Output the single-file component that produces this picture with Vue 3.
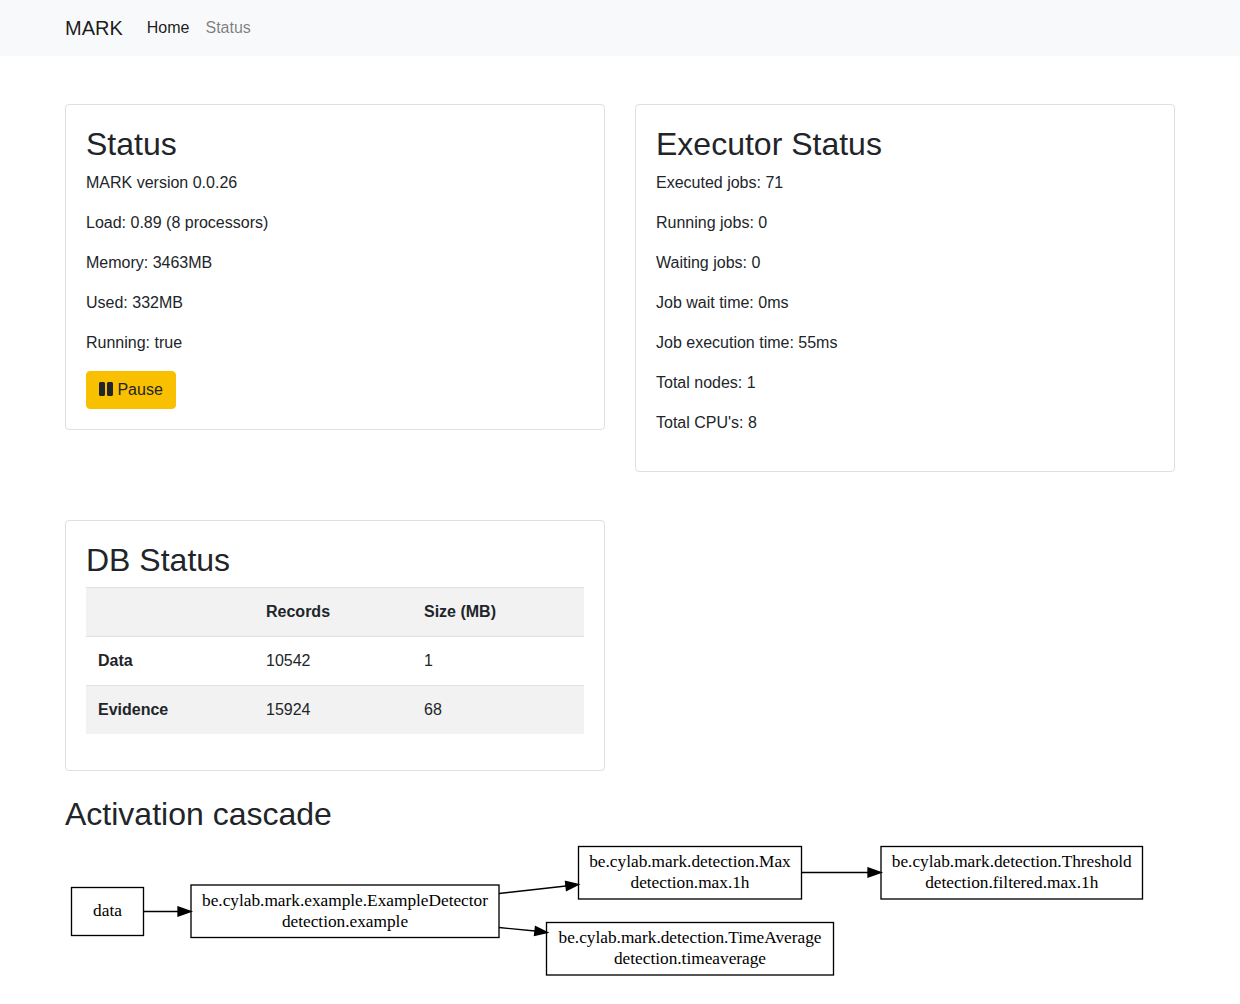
<template>
  <nav class="navbar">
    <a class="brand">MARK</a>
    <a class="nav-link active">Home</a>
    <a class="nav-link">Status</a>
  </nav>

  <main class="container">
    <div class="row">
      <section class="card">
        <h2>Status</h2>
        <p v-for="line in statusLines" :key="line">{{ line }}</p>
        <button class="btn-pause">
          <svg class="pause-icon" width="14" height="16" viewBox="0 0 448 512" fill="currentColor">
            <path d="M144 479H48c-26.5 0-48-21.5-48-48V79c0-26.5 21.5-48 48-48h96c26.5 0 48 21.5 48 48v352c0 26.5-21.5 48-48 48zm304-48V79c0-26.5-21.5-48-48-48h-96c-26.5 0-48 21.5-48 48v352c0 26.5 21.5 48 48 48h96c26.5 0 48-21.5 48-48z" />
          </svg>
          Pause
        </button>
      </section>
      <section class="card">
        <h2>Executor Status</h2>
        <p v-for="line in executorLines" :key="line">{{ line }}</p>
      </section>
    </div>

    <div class="row db-row">
      <section class="card">
        <h2>DB Status</h2>
        <table>
          <thead>
            <tr>
              <th class="col-name"></th>
              <th class="col-records">Records</th>
              <th>Size (MB)</th>
            </tr>
          </thead>
          <tbody>
            <tr v-for="row in dbRows" :key="row.name">
              <th>{{ row.name }}</th>
              <td>{{ row.records }}</td>
              <td>{{ row.size }}</td>
            </tr>
          </tbody>
        </table>
      </section>
      <div></div>
    </div>

    <h2 class="cascade-title">Activation cascade</h2>
    <svg class="graph" width="1110" height="145" viewBox="0 0 1110 145">
      <g v-for="node in nodes" :key="node.x">
        <rect :x="node.x" :y="node.y" :width="node.w" :height="node.h" fill="#fff" stroke="#000" stroke-width="1.33" />
        <text
          v-for="(line, i) in node.lines"
          :key="line"
          :x="node.x + node.w / 2"
          :y="node.y + node.first + i * 21"
          text-anchor="middle"
        >{{ line }}</text>
      </g>
      <g v-for="edge in edges" :key="edge.line">
        <path :d="edge.line" fill="none" stroke="#000" stroke-width="1.33" />
        <polygon :points="edge.head" fill="#000" stroke="#000" stroke-width="1.33" />
      </g>
    </svg>
  </main>
</template>

<script setup>
const statusLines = [
  'MARK version 0.0.26',
  'Load: 0.89 (8 processors)',
  'Memory: 3463MB',
  'Used: 332MB',
  'Running: true',
];

const executorLines = [
  'Executed jobs: 71',
  'Running jobs: 0',
  'Waiting jobs: 0',
  'Job wait time: 0ms',
  'Job execution time: 55ms',
  'Total nodes: 1',
  "Total CPU's: 8",
];

const dbRows = [
  { name: 'Data', records: 10542, size: 1 },
  { name: 'Evidence', records: 15924, size: 68 },
];

// coordinates are relative to the svg, which starts at x=65 y=841
const nodes = [
  { x: 6.5, y: 46.5, w: 72, h: 48, first: 28, lines: ['data'] },
  { x: 126, y: 44, w: 308, h: 52.5, first: 21, lines: ['be.cylab.mark.example.ExampleDetector', 'detection.example'] },
  { x: 513.5, y: 5.5, w: 223, h: 52.5, first: 20, lines: ['be.cylab.mark.detection.Max', 'detection.max.1h'] },
  { x: 816, y: 5.5, w: 261.5, h: 52.5, first: 20, lines: ['be.cylab.mark.detection.Threshold', 'detection.filtered.max.1h'] },
  { x: 481.5, y: 81.5, w: 287, h: 52.5, first: 20, lines: ['be.cylab.mark.detection.TimeAverage', 'detection.timeaverage'] },
];

const edges = [
  { line: 'M78.5 70.5H113', head: '113,66 126,70.5 113,75' },
  { line: 'M434 52.5L501 45', head: '500.5,40.5 513.5,43.5 501.5,49.5' },
  { line: 'M434 86.5L470 90', head: '470.5,85.5 482.5,91.5 469.5,94.5' },
  { line: 'M736.5 31.5H803', head: '803,27 816,31.5 803,36' },
];
</script>

<style>
body {
  font-family: "Liberation Sans", Arial, sans-serif;
  font-size: 16px;
  line-height: 1.5;
  color: #212529;
  background: #fff;
}
</style>

<style scoped>
.navbar {
  display: flex;
  align-items: center;
  height: 56px;
  padding: 0 65px;
  background: #f8f9fa;
}

.brand {
  font-size: 20px;
  margin-right: 16px;
  color: rgba(0, 0, 0, 0.9);
}

.nav-link {
  padding: 0 8px;
  color: rgba(0, 0, 0, 0.5);
}

.nav-link.active {
  color: rgba(0, 0, 0, 0.9);
}

.container {
  padding: 48px 65px 0;
}

.row {
  display: grid;
  grid-template-columns: 540px 540px;
  gap: 30px;
  align-items: start;
}

.db-row {
  margin-top: 48px;
}

.card {
  padding: 20px;
  border: 1px solid rgba(0, 0, 0, 0.125);
  border-radius: 4px;
}

h2 {
  margin: 0 0 8px;
  font-size: 32px;
  font-weight: 500;
  line-height: 38px;
}

p {
  margin: 0 0 16px;
}

.btn-pause {
  display: block;
  height: 38px;
  padding: 0 12px;
  font: inherit;
  color: #212529;
  background: #f9c000;
  border: 1px solid #f9c000;
  border-radius: 4px;
}

.pause-icon {
  vertical-align: -2px;
}

table {
  width: 100%;
  margin-bottom: 16px;
  border-collapse: collapse;
  table-layout: fixed;
}

th,
td {
  box-sizing: border-box;
  padding: 12px;
  text-align: left;
  border-top: 1px solid #dee2e6;
}

th {
  font-weight: 700;
}

.col-name {
  width: 168px;
}

.col-records {
  width: 158px;
}

thead tr,
tbody tr:nth-child(even) {
  background: rgba(0, 0, 0, 0.05);
}

.cascade-title {
  margin-top: 24px;
}

.graph {
  display: block;
}

.graph text {
  font-family: "Liberation Serif", "Times New Roman", serif;
  font-size: 17.3px;
  fill: #000;
}
</style>
